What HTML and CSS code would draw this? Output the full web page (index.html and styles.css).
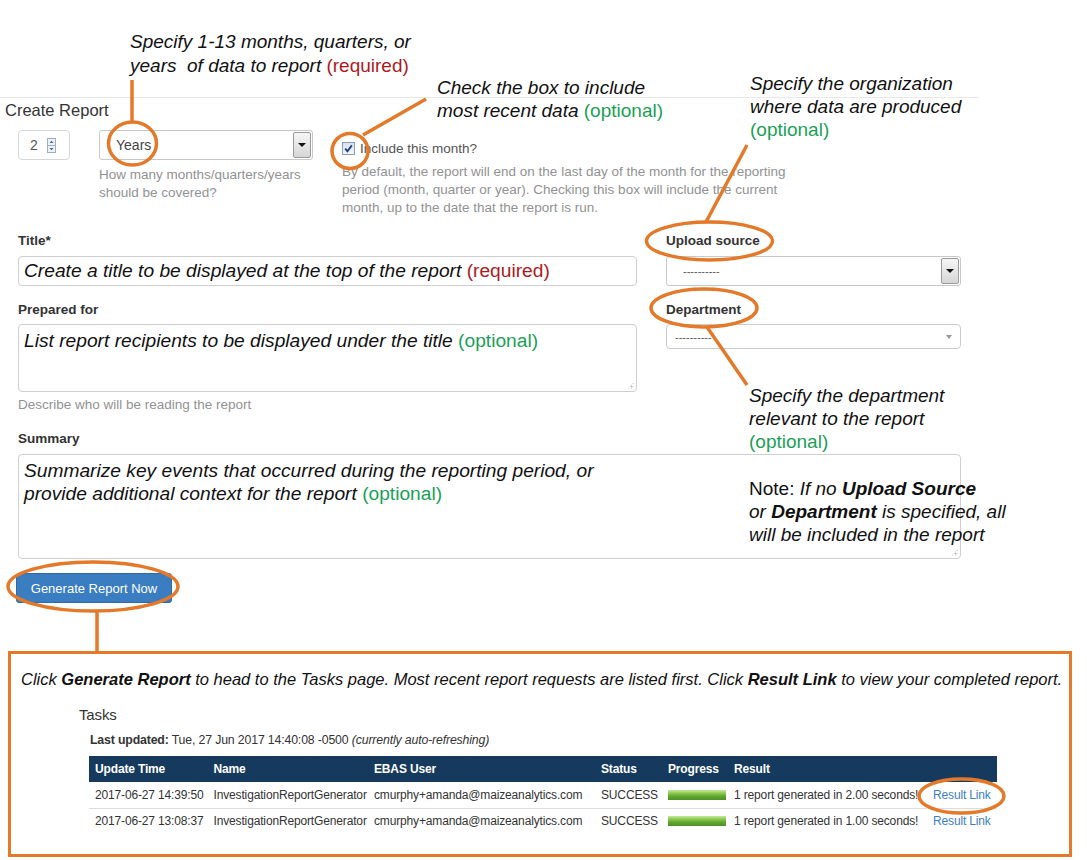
FILE: index.html
```html
<!DOCTYPE html>
<html lang="en">
<head>
<meta charset="utf-8">
<title>Create Report</title>
<link rel="stylesheet" href="styles.css">
</head>
<body>
<div class="page">
  <main class="form">
    <h2 class="report-head">Create Report</h2>

    <div class="period-row">
      <div class="num-input">
        <span class="num-val">2</span>
        <svg class="spinner" width="9" height="15" viewBox="0 0 9 15">
          <rect x="0.5" y="0.5" width="8" height="14" fill="#eef2f8" stroke="#9fb0c6"/>
          <line x1="0.5" y1="7.5" x2="8.5" y2="7.5" stroke="#9fb0c6"/>
          <path d="M2.5 5 L4.5 2.8 L6.5 5 Z" fill="#4a6a95"/>
          <path d="M2.5 10 L4.5 12.2 L6.5 10 Z" fill="#4a6a95"/>
        </svg>
      </div>
      <div class="period-group">
        <div class="select classic">
          <span class="select-text">Years</span>
          <span class="select-btn"><i class="tri"></i></span>
        </div>
        <p class="help">How many months/quarters/years<br>should be covered?</p>
      </div>
      <div class="check-group">
        <label class="check-line">
          <span class="checkbox">
            <svg width="11" height="11" viewBox="0 0 11 11"><path d="M2.2 5.6 L4.4 8.2 L8.8 2.4" fill="none" stroke="#1e3d86" stroke-width="1.8"/></svg>
          </span>
          Include this month?
        </label>
        <p class="help">By default, the report will end on the last day of the month for the reporting<br>period (month, quarter or year). Checking this box will include the current<br>month, up to the date that the report is run.</p>
      </div>
    </div>

    <div class="fields">
      <div class="col-left">
        <div class="field">
          <div class="label">Title*</div>
          <div class="input title-input">Create a title to be displayed at the top of the report <span class="req">(required)</span></div>
        </div>
        <div class="field">
          <div class="label label-tight">Prepared for</div>
          <div class="textarea prepared">List report recipients to be displayed under the title <span class="opt">(optional)</span><span class="grip"></span></div>
          <p class="help help-tight">Describe who will be reading the report</p>
        </div>
      </div>
      <div class="col-right">
        <div class="field">
          <div class="label">Upload source</div>
          <div class="select classic upload">
            <span class="select-text dash">----------</span>
            <span class="select-btn"><i class="tri"></i></span>
          </div>
        </div>
        <div class="field">
          <div class="label label-tight">Department</div>
          <div class="select2">
            <span class="dash">----------</span>
            <i class="tri2"></i>
          </div>
        </div>
      </div>
    </div>

    <div class="summary-field">
      <div class="label">Summary</div>
      <div class="textarea summary">Summarize key events that occurred during the reporting period, or<br>provide additional context for the report <span class="opt">(optional)</span><span class="grip"></span></div>
    </div>

    <button class="btn-generate" type="button">Generate Report Now</button>

    <section class="tasks-box">
      <p class="box-note">Click <b>Generate Report</b> to head to the Tasks page. Most recent report requests are listed first. Click <b>Result Link</b> to view your completed report.</p>
      <div class="tasks">
        <h3 class="tasks-title">Tasks</h3>
        <p class="updated"><b>Last updated:</b> Tue, 27 Jun 2017 14:40:08 -0500 <i>(currently auto-refreshing)</i></p>
        <table class="task-table">
          <colgroup>
            <col class="c1"><col class="c2"><col class="c3"><col class="c4"><col class="c5"><col class="c6"><col class="c7">
          </colgroup>
          <thead>
            <tr><th>Update Time</th><th>Name</th><th>EBAS User</th><th>Status</th><th>Progress</th><th>Result</th><th></th></tr>
          </thead>
          <tbody>
            <tr>
              <td>2017-06-27 14:39:50</td><td>InvestigationReportGenerator</td><td>cmurphy+amanda@maizeanalytics.com</td><td>SUCCESS</td><td><span class="bar"></span></td><td>1 report generated in 2.00 seconds!</td><td><a class="link">Result Link</a></td>
            </tr>
            <tr>
              <td>2017-06-27 13:08:37</td><td>InvestigationReportGenerator</td><td>cmurphy+amanda@maizeanalytics.com</td><td>SUCCESS</td><td><span class="bar"></span></td><td>1 report generated in 1.00 seconds!</td><td><a class="link">Result Link</a></td>
            </tr>
          </tbody>
        </table>
      </div>
    </section>
  </main>

  <div class="callout c-period">Specify 1-13 months, quarters, or<br>years&nbsp; of data to report <span class="req">(required)</span></div>
  <div class="callout c-check">Check the box to include<br>most recent data <span class="opt">(optional)</span></div>
  <div class="callout c-org">Specify the organization<br>where data are produced<br><span class="opt">(optional)</span></div>
  <div class="callout c-dept">Specify the department<br>relevant to the report<br><span class="opt">(optional)</span></div>
  <div class="callout c-note"><span class="upright">Note:</span> If no <b>Upload Source</b><br>or <b>Department</b> is specified, all<br>will be included in the report</div>

  <svg class="marks" width="1087" height="860" viewBox="0 0 1087 860">
    <g fill="none" stroke="#e4792a" stroke-width="3.5">
      <line x1="132" y1="80" x2="132" y2="122"/>
      <ellipse cx="132.5" cy="143.5" rx="24" ry="21.5"/>
      <line x1="363" y1="135" x2="426" y2="99"/>
      <ellipse cx="350" cy="151" rx="18" ry="17.5"/>
      <line x1="747" y1="145" x2="706" y2="222"/>
      <ellipse cx="709.5" cy="241" rx="63" ry="19"/>
      <ellipse cx="704" cy="308" rx="53" ry="19"/>
      <line x1="707" y1="327" x2="747" y2="385"/>
      <ellipse cx="93" cy="586.5" rx="85" ry="24.5"/>
      <line x1="97" y1="611" x2="97" y2="652"/>
      <ellipse cx="961.5" cy="796" rx="42.5" ry="17"/>
    </g>
  </svg>
</div>
</body>
</html>
```

FILE: styles.css
```css
* { box-sizing: border-box; }

body {
  margin: 0;
  font-family: "Liberation Sans", Arial, sans-serif;
  color: #333;
  background: #fff;
}

.page {
  position: relative;
  width: 1087px;
  height: 860px;
  overflow: hidden;
  background: #fff;
}

.form {
  padding-top: 97px;
}

.report-head {
  margin: 0;
  width: 978px;
  border-top: 1px solid #e8e8e8;
  padding: 2px 0 0 5px;
  font-size: 16.5px;
  line-height: 20px;
  font-weight: normal;
  color: #333;
}

/* ---------- period row ---------- */
.period-row {
  display: flex;
  align-items: flex-start;
  margin-top: 10px;
  padding-left: 18px;
}

.num-input {
  width: 52px;
  height: 30px;
  border: 1px solid #d6d6d6;
  border-radius: 4px;
  display: flex;
  align-items: center;
  padding-left: 11px;
  font-size: 14px;
  color: #555;
}

.spinner {
  margin-left: 9px;
  display: block;
}

.period-group {
  margin-left: 29px;
  width: 214px;
}

.select {
  height: 30px;
  border: 1px solid #c9c9c9;
  border-radius: 3px;
  display: flex;
  align-items: stretch;
  background: #fff;
}

.select-text {
  flex: 1;
  padding-left: 16px;
  line-height: 28px;
  font-size: 14px;
  color: #444;
}

.select-text.dash {
  font-size: 11px;
  color: #555;
}

.select-btn {
  width: 18px;
  margin: 1px;
  border: 1px solid #9a9a9a;
  border-radius: 2px;
  background: linear-gradient(#f6f6f6, #d6d6d6);
  display: flex;
  align-items: center;
  justify-content: center;
}

.tri {
  display: block;
  width: 0;
  height: 0;
  border-top: 4px solid #111;
  border-left: 4px solid transparent;
  border-right: 4px solid transparent;
}

.help {
  margin: 6px 0 0;
  font-size: 13.5px;
  line-height: 18px;
  color: #929292;
  white-space: nowrap;
}

.check-group {
  margin-left: 29px;
  padding-top: 9px;
}

.check-line {
  display: flex;
  align-items: center;
  height: 18px;
  font-size: 13.5px;
  color: #555;
}

.checkbox {
  width: 13px;
  height: 13px;
  border: 1px solid #8d9db5;
  background: linear-gradient(#d6e1f2, #f3f6fb);
  margin-right: 5px;
  display: flex;
  align-items: center;
  justify-content: center;
}

.checkbox svg { display: block; }

/* ---------- fields grid ---------- */
.fields {
  display: flex;
  gap: 29px;
  padding-left: 18px;
  margin-top: 15px;
}

.col-left { width: 619px; }
.col-right { width: 295px; }

.field + .field { margin-top: 15px; }

.label {
  font-size: 13.5px;
  font-weight: bold;
  line-height: 18px;
  color: #333;
  margin-bottom: 6px;
}

.label-tight { margin-bottom: 5px; }

.input,
.textarea {
  border: 1px solid #cfcfcf;
  border-radius: 4px;
  background: #fff;
  font-size: 19.2px;
  font-style: italic;
  color: #111;
  white-space: nowrap;
}

.title-input {
  height: 30px;
  padding-left: 5px;
  line-height: 28px;
}

.textarea {
  position: relative;
  padding: 4px 5px;
  line-height: 23px;
}

.prepared { height: 68px; }

.help-tight { margin-top: 4px; }

.grip {
  position: absolute;
  right: 2px;
  bottom: 2px;
  width: 7px;
  height: 7px;
  background: radial-gradient(circle, #b5b5b5 0.9px, transparent 1.1px) 0 0 / 3px 3px;
  clip-path: polygon(100% 0, 100% 100%, 0 100%);
}

.select2 {
  height: 25px;
  border: 1px solid #cccccc;
  border-radius: 4px;
  display: flex;
  align-items: center;
  padding: 0 8px 0 8px;
}

.select2 .dash {
  flex: 1;
  font-size: 11px;
  color: #555;
}

.tri2 {
  display: block;
  width: 0;
  height: 0;
  border-top: 4px solid #999;
  border-left: 3.5px solid transparent;
  border-right: 3.5px solid transparent;
}

/* ---------- summary ---------- */
.summary-field {
  padding-left: 18px;
  margin-top: 16px;
}

.summary {
  width: 943px;
  height: 105px;
}

.req {
  font-style: normal;
  color: #ad1a1f;
}

.opt {
  font-style: normal;
  color: #1b9f58;
}

/* ---------- button ---------- */
.btn-generate {
  display: block;
  margin: 14px 0 0 16px;
  width: 156px;
  height: 30px;
  border: 1px solid #2f6aa6;
  border-radius: 3px;
  background: #3a7dc0;
  color: #fff;
  font-family: "Liberation Sans", Arial, sans-serif;
  font-size: 13px;
  padding: 0;
}

/* ---------- tasks box ---------- */
.tasks-box {
  margin: 48px 0 0 8px;
  width: 1064px;
  height: 206px;
  border: 3px solid #e4792a;
  padding: 15px 0 0 10px;
}

.box-note {
  margin: 0;
  font-size: 16.5px;
  line-height: 20px;
  font-style: italic;
  color: #111;
  white-space: nowrap;
}

.tasks {
  margin: 16px 0 0 58px;
  letter-spacing: -0.15px;
}

.tasks-title {
  margin: 0;
  font-size: 15px;
  line-height: 20px;
  font-weight: normal;
  color: #333;
}

.updated {
  margin: 7px 0 0 11px;
  font-size: 12.3px;
  line-height: 16px;
  color: #333;
  white-space: nowrap;
}

.task-table {
  margin: 8px 0 0 10px;
  width: 908px;
  table-layout: fixed;
  border-collapse: collapse;
  font-size: 12px;
  color: #333;
}

.c1 { width: 118.5px; }
.c2 { width: 160.5px; }
.c3 { width: 227px; }
.c4 { width: 67px; }
.c5 { width: 66px; }
.c6 { width: 199px; }
.c7 { width: 70px; }

.task-table th {
  height: 26px;
  padding: 0 0 0 6px;
  background: #163a5d;
  color: #fff;
  text-align: left;
  font-weight: bold;
  white-space: nowrap;
}

.task-table td {
  height: 26px;
  padding: 0 0 0 6px;
  white-space: nowrap;
  overflow: hidden;
}

.task-table tbody tr:first-child td {
  border-bottom: 1px solid #dddddd;
}

.bar {
  display: block;
  width: 58px;
  height: 10px;
  background: linear-gradient(#c8e89e 0%, #8fcb58 30%, #62a82f 60%, #4f9024 100%);
}

.link {
  color: #3d7fc2;
}

/* ---------- callouts ---------- */
.callout {
  position: absolute;
  font-size: 19px;
  line-height: 23px;
  font-style: italic;
  color: #111;
  white-space: nowrap;
}

.callout .upright { font-style: normal; }

.c-period { left: 130px; top: 30px; line-height: 24px; }
.c-check { left: 437px; top: 76px; }
.c-org { left: 750px; top: 72px; }
.c-dept { left: 749px; top: 384px; }
.c-note { left: 749px; top: 477px; }

.marks {
  position: absolute;
  left: 0;
  top: 0;
  pointer-events: none;
}
```
